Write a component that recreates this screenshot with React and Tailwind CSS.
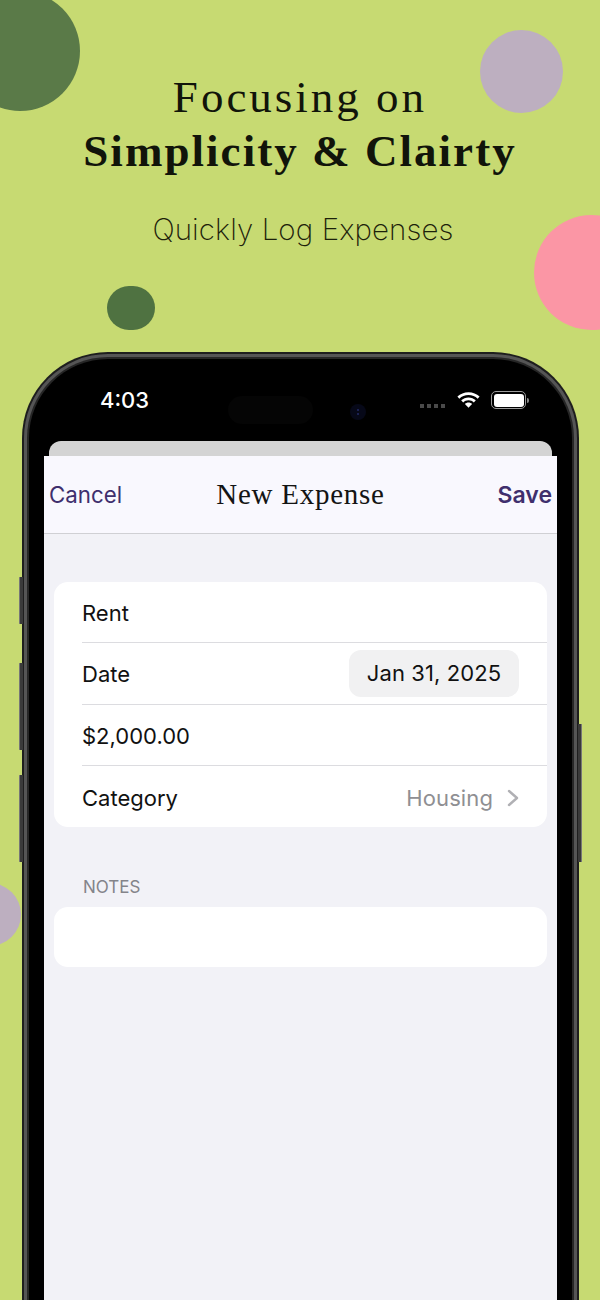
import React from 'react';

const serif = 'font-["Liberation_Serif",serif]';
const sans = 'font-["Inter",sans-serif]';

const SideButton = ({ className }) => (
  <div className={`absolute w-[4px] rounded-l-[1px] bg-[#3a3a3a] border-l border-[#777] ${className}`} />
);

const Row = ({ children, last }) => (
  <div className={`ml-[28px] h-[61.3px] pt-[3px] flex items-center pr-[28px] ${last ? '' : 'border-b border-[#dcdce0]'}`}>
    {children}
  </div>
);

const StatusBar = () => (
  <div className="h-[82px] shrink-0 flex items-center pl-[56px]">
    <span className="w-[51px] text-white text-[22px] leading-[28px] font-medium">4:03</span>
    <div className="ml-[77px] mt-[20px] w-[85px] h-[28px] rounded-full bg-[#050505]" />
    <div className="ml-[37px] mt-[24px] w-[16px] h-[16px] rounded-full bg-[#060818] flex flex-col items-center justify-center gap-[2px]">
      <div className="w-[2px] h-[2px] rounded-full bg-[#232a66]" />
      <div className="w-[2px] h-[2px] rounded-full bg-[#232a66]" />
    </div>
    <div className="ml-[54px] mt-[12px] flex gap-[3px]">
      <div className="w-[4px] h-[4px] bg-[#4a4a4a]" />
      <div className="w-[4px] h-[4px] bg-[#4a4a4a]" />
      <div className="w-[4px] h-[4px] bg-[#4a4a4a]" />
      <div className="w-[4px] h-[4px] bg-[#4a4a4a]" />
    </div>
    <svg className="ml-[12px]" width="23" height="16" viewBox="1 3 22 15" fill="white">
      <path d="M12 3C7.9 3 4.2 4.6 1.4 7.2L3.2 9.2C5.5 7 8.6 5.7 12 5.7s6.5 1.300 8.800 3.500l1.800-2C19.800 4.600 16.100 3 12 3z" />
      <path d="M12 8c-2.700 0-5.100 1-7 2.800l1.900 2C8.200 11.500 10 10.800 12 10.800s3.800.7 5.100 2l1.900-2C17.100 9 14.700 8 12 8z" />
      <path d="M12 13c-1.300 0-2.500.5-3.400 1.400L12 18l3.400-3.600C14.500 13.500 13.300 13 12 13z" />
    </svg>
    <div className="ml-[11px] w-[35px] h-[18px] rounded-[5px] border border-[#9a9a9a] p-[1.5px]">
      <div className="w-full h-full rounded-[3px] bg-white" />
    </div>
    <div className="ml-[1px] w-[2px] h-[5px] rounded-r-full bg-[#8a8a8a]" />
  </div>
);

const App = () => {
  return (
    <div className={`relative w-[600px] h-[1300px] overflow-hidden bg-[#c7da72] ${sans}`}>
      {/* background dots */}
      <div className="absolute left-[-40px] top-[-9px] w-[120px] h-[120px] rounded-full bg-[#5a7a48]" />
      <div className="absolute left-[480px] top-[30px] w-[83px] h-[83px] rounded-full bg-[#bdafc0]" />
      <div className="absolute left-[534px] top-[215px] w-[115px] h-[115px] rounded-full bg-[#fb96a5]" />
      <div className="absolute left-[107px] top-[286px] w-[48px] h-[44px] rounded-full bg-[#4f7241]" />
      <div className="absolute left-[-42px] top-[883px] w-[63px] h-[63px] rounded-full bg-[#bdafc0]" />

      <div className="relative flex flex-col">
        <div className="flex flex-col items-center pt-[70px] text-[#11140a]">
          <h1 className={`${serif} font-normal text-[45px] leading-[54px] tracking-[3px] text-center`}>
            Focusing on
            <br />
            <span className="font-bold tracking-[2.05px]">Simplicity &amp; Clairty</span>
          </h1>
          <p className="mt-[31px] ml-[6px] text-[29.5px] leading-[40px] font-extralight tracking-[0.1px] text-[#1c210a]">
            Quickly Log Expenses
          </p>
        </div>

        {/* phone */}
        <div className="relative mt-[103px] ml-[22px] w-[557px] h-[1100px] shrink-0">
          <SideButton className="left-[-3px] top-[225px] h-[47px]" />
          <SideButton className="left-[-3px] top-[311px] h-[87px]" />
          <SideButton className="left-[-3px] top-[423px] h-[87px]" />
          <div className="absolute right-[-3px] top-[372px] h-[138px] w-[4px] bg-[#3a3a3a] border-r border-[#777]" />

          <div className="h-full rounded-t-[86px] bg-[#1e1e1e] p-[2px]">
            <div className="h-full rounded-t-[84px] bg-[#555555] p-[3px]">
              <div className="h-full rounded-t-[81px] bg-[#262626] p-[2px]">
                <div className="h-full rounded-t-[79px] bg-black px-[15px] flex flex-col">
                  <StatusBar />

                  {/* sheet */}
                  <div className="mx-[5px] h-[15px] shrink-0 rounded-t-[12px] bg-[#d4d4d4]" />
                  <div className="flex-1 bg-[#f2f2f7]">
                    <div className="h-[78px] grid grid-cols-[1fr_auto_1fr] items-center px-[5px] bg-[#f9f8fe] border-b border-[#d0d0d4]">
                      <span className="pt-[1px] text-[22.3px] text-[#3f2f6d]">Cancel</span>
                      <span className={`${serif} text-[29px] tracking-[0.75px] text-[#141414]`}>
                        New Expense
                      </span>
                      <span className="pt-[1px] justify-self-end text-[23px] font-semibold text-[#3f2f6d]">Save</span>
                    </div>

                    <div className="mx-[10px] mt-[48px] rounded-[14px] bg-white text-[22px] text-[#111]">
                      <Row>Rent</Row>
                      <Row>
                        <span className="flex-1">Date</span>
                        <span className="mb-[3px] h-[47px] w-[170px] flex items-center justify-center rounded-[12px] bg-[#f1f1f2] tracking-[0.1px]">Jan 31, 2025</span>
                      </Row>
                      <Row>$2,000.00</Row>
                      <Row last>
                        <span className="flex-1">Category</span>
                        <span className="text-[#8f8f93] mr-[14px] tracking-[0.1px]">Housing</span>
                        <svg width="12" height="20" viewBox="0 0 12 20" fill="none" stroke="#b0b0b4" strokeWidth="2.4" strokeLinecap="round" strokeLinejoin="round">
                          <path d="M2 3l8 7-8 7" />
                        </svg>
                      </Row>
                    </div>

                    <div className="ml-[39px] mt-[49px] text-[17px] leading-[22px] text-[#84848a]">NOTES</div>
                    <div className="mx-[10px] mt-[9px] h-[60px] rounded-[14px] bg-white" />
                  </div>
                </div>
              </div>
            </div>
          </div>
        </div>
      </div>
    </div>
  );
};

export default App;
